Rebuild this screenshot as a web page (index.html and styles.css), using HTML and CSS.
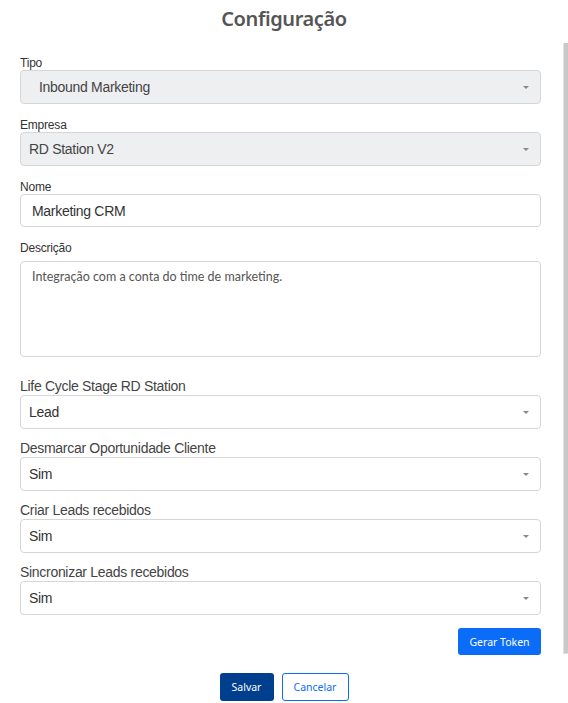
FILE: index.html
```html
<!DOCTYPE html>
<html lang="pt-BR">
<head>
<meta charset="utf-8">
<link rel="stylesheet" href="styles.css">
</head>
<body>
<div class="page">
  <h1 class="title">Configuração</h1>
  <form class="form">
    <div class="group">
      <label class="lbl">Tipo</label>
      <div class="select disabled wide"><span>Inbound Marketing</span><i class="caret"></i></div>
    </div>
    <div class="group">
      <label class="lbl">Empresa</label>
      <div class="select disabled"><span>RD Station V2</span><i class="caret"></i></div>
    </div>
    <div class="group">
      <label class="lbl">Nome</label>
      <div class="input">Marketing CRM</div>
    </div>
    <div class="group desc">
      <label class="lbl">Descrição</label>
      <div class="textarea">Integração com a conta do time de marketing.</div>
    </div>
    <div class="group big first">
      <label class="lbl2">Life Cycle Stage RD Station</label>
      <div class="select"><span>Lead</span><i class="caret"></i></div>
    </div>
    <div class="group big">
      <label class="lbl2">Desmarcar Oportunidade Cliente</label>
      <div class="select"><span>Sim</span><i class="caret"></i></div>
    </div>
    <div class="group big">
      <label class="lbl2">Criar Leads recebidos</label>
      <div class="select"><span>Sim</span><i class="caret"></i></div>
    </div>
    <div class="group big">
      <label class="lbl2">Sincronizar Leads recebidos</label>
      <div class="select"><span>Sim</span><i class="caret"></i></div>
    </div>
    <div class="token-row"><button type="button" class="btn-token">Gerar Token</button></div>
    <div class="actions">
      <button type="button" class="btn-save">Salvar</button>
      <button type="button" class="btn-cancel">Cancelar</button>
    </div>
  </form>
  <div class="scrollbar"></div>
</div>
</body>
</html>
```
FILE: styles.css
```css
* { box-sizing: border-box; }
html, body { margin: 0; padding: 0; background: #fff; }
.page { position: relative; width: 568px; height: 703px; overflow: hidden; font-family: "Liberation Sans", Arial, sans-serif; }
.title { margin: 0; padding-top: 5px; height: 42px; text-align: center; font-family: "Noto Sans", sans-serif; font-weight: 600; font-size: 20px; color: #555; line-height: 28px; letter-spacing: -0.4px; }
.form { padding: 14px 27px 0 20px; display: flex; flex-direction: column; }
.group { display: flex; flex-direction: column; margin-bottom: 14px; }
.lbl { font-size: 12px; line-height: 14px; color: #333; letter-spacing: -0.2px; }
.lbl2 { font-size: 14px; line-height: 16px; color: #444; margin-bottom: 1px; letter-spacing: -0.3px; }
.select { height: 34px; border: 1px solid #d6d6d9; border-radius: 4px; background: #fff; display: flex; align-items: center; justify-content: space-between; padding: 0 11px 0 8px; font-size: 14px; color: #333; letter-spacing: -0.3px; }
.select.disabled { background: #eeeff1; color: #444; }
.select.wide { padding-left: 18px; }
.caret { width: 0; height: 0; border-left: 3px solid transparent; border-right: 3px solid transparent; border-top: 3px solid #888; }
.input { height: 33px; border: 1px solid #d6d6d9; border-radius: 4px; padding: 0 11px; display: flex; align-items: center; font-size: 14px; color: #333; letter-spacing: -0.3px; }
.group.desc { margin-bottom: 21px; }
.group.desc .lbl { margin-bottom: 6px; }
.textarea { height: 96px; border: 1px solid #d6d6d9; border-radius: 4px; padding: 7px 11px; font-family: Lato, sans-serif; font-size: 12.5px; color: #555; line-height: 16px; }
.group.big { margin-bottom: 11px; }
.token-row { display: flex; justify-content: flex-end; margin-top: 2px; }
.btn-token { height: 27px; width: 83px; border: none; border-radius: 3px; background: #0b6cf7; color: #fff; font-family: "Noto Sans", sans-serif; font-size: 10.5px; padding: 0; }
.actions { display: flex; justify-content: center; gap: 8px; margin-top: 18px; padding-left: 7px; }
.btn-save { height: 28px; width: 54px; border: none; border-radius: 3px; background: #003e8e; color: #fff; font-family: "Noto Sans", sans-serif; font-size: 10.5px; padding: 0; }
.btn-cancel { height: 28px; width: 67px; border: 1px solid #0b6cf7; border-radius: 3px; background: #fff; color: #0b6cf7; font-family: "Noto Sans", sans-serif; font-size: 10.5px; padding: 0; }
.scrollbar { position: absolute; right: 0; top: 43px; width: 5px; height: 611px; background: #c9c9c9; border-left: 1px solid #e2e2e2; border-bottom: 1px solid #e2e2e2; }
```
